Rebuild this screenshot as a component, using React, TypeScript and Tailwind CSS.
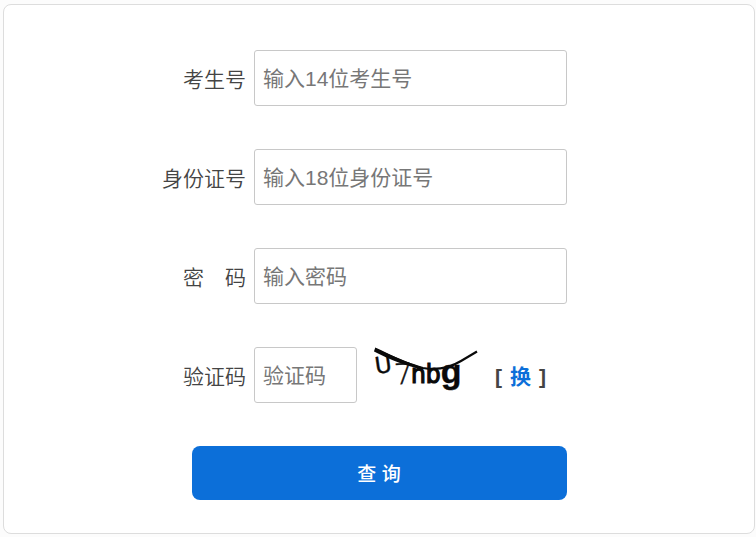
import { useState } from "react";
import type { FormEvent } from "react";

const FIELDS = [
  { id: "ksh", label: "考生号", placeholder: "输入14位考生号", type: "text", maxLength: 14 },
  { id: "sfzh", label: "身份证号", placeholder: "输入18位身份证号", type: "text", maxLength: 18 },
  { id: "mm", label: "密　码", placeholder: "输入密码", type: "password", maxLength: 32 },
];

const LABEL = "w-1/3 shrink-0 pr-2 pt-1 text-right font-[350] text-[#444]";
const INPUT =
  "h-14 min-w-0 rounded-[3px] border border-[#c8c8c8] bg-white px-2 pt-[2px] placeholder:text-[#777] focus:border-[#0c6fd9] focus:outline-none";

function Captcha() {
  return (
    <svg width="120" height="50" viewBox="0 0 120 50" role="img" aria-label="验证码图片" className="shrink-0">
      <g fill="#0a0a0a" stroke="#0a0a0a" fontFamily="'DejaVu Sans', 'Noto Sans', sans-serif">
        <text x="10" y="26" fontSize="23" strokeWidth="0.4" transform="rotate(-8 18 20)">U</text>
        <text x="30" y="37" fontSize="29" strokeWidth="0.4" fontFamily="'Open Sans', sans-serif" fontWeight="300" transform="rotate(-4 37 28)">7</text>
        <text x="46" y="36" fontSize="26" strokeWidth="1.2" fontFamily="'DejaVu Sans Condensed', 'DejaVu Sans', sans-serif">
          nb<tspan fontSize="34" fontWeight="700" strokeWidth="0.4" fontFamily="'Liberation Sans', sans-serif">g</tspan>
        </text>
      </g>
      {/* 干扰线 */}
      <path d="M10.3 0.6 C26 8 44 17 58 20.5 L58 22.5 C44 20 25 12.5 9 4.4 Z" fill="#0a0a0a" />
      <path d="M10 2.5 C26 9 44 18 58 21 C74 24 86 20 96 14 L112 4.5" fill="none" stroke="#0a0a0a" strokeWidth="2.2" />
    </svg>
  );
}

export default function App() {
  const [values, setValues] = useState<Record<string, string>>({});

  const update = (id: string, value: string) => setValues((v) => ({ ...v, [id]: value }));
  const submit = (e: FormEvent) => e.preventDefault();

  return (
    <div className="bg-[#fcfcfc] pt-1 pr-px pb-[3px] pl-[3px] font-['Liberation_Sans','Noto_Sans_CJK_SC',sans-serif] text-[21px]">
      <form
        onSubmit={submit}
        className="flex flex-col gap-[43px] rounded-lg border border-[#ddd] bg-white pt-[45px] pb-[33px]"
      >
        {FIELDS.map((f) => (
          <div key={f.id} className="flex items-center">
            <label htmlFor={f.id} className={LABEL}>{f.label}</label>
            <input
              id={f.id}
              type={f.type}
              maxLength={f.maxLength}
              placeholder={f.placeholder}
              value={values[f.id] ?? ""}
              onChange={(e) => update(f.id, e.target.value)}
              className={`${INPUT} w-5/12`}
            />
          </div>
        ))}

        {/* 验证码 */}
        <div className="flex items-center">
          <label htmlFor="yzm" className={LABEL}>验证码</label>
          <input
            id="yzm"
            type="text"
            placeholder="验证码"
            value={values.yzm ?? ""}
            onChange={(e) => update("yzm", e.target.value)}
            className={`${INPUT} w-[103px] shrink-0`}
          />
          <div className="flex h-14 items-start pl-2">
            <Captcha />
          </div>
          <span className="flex shrink-0 gap-2 pt-1 pl-2.5 font-bold text-[#444]">
            <span>[</span>
            <a href="#" className="text-[#0c6fd9]">换</a>
            <span>]</span>
          </span>
        </div>

        <button
          type="submit"
          className="h-[54px] w-1/2 cursor-pointer self-center rounded-lg bg-[#0c6fd9] pt-1 text-[19px] font-medium text-white"
        >
          查 询
        </button>
      </form>
    </div>
  );
}
